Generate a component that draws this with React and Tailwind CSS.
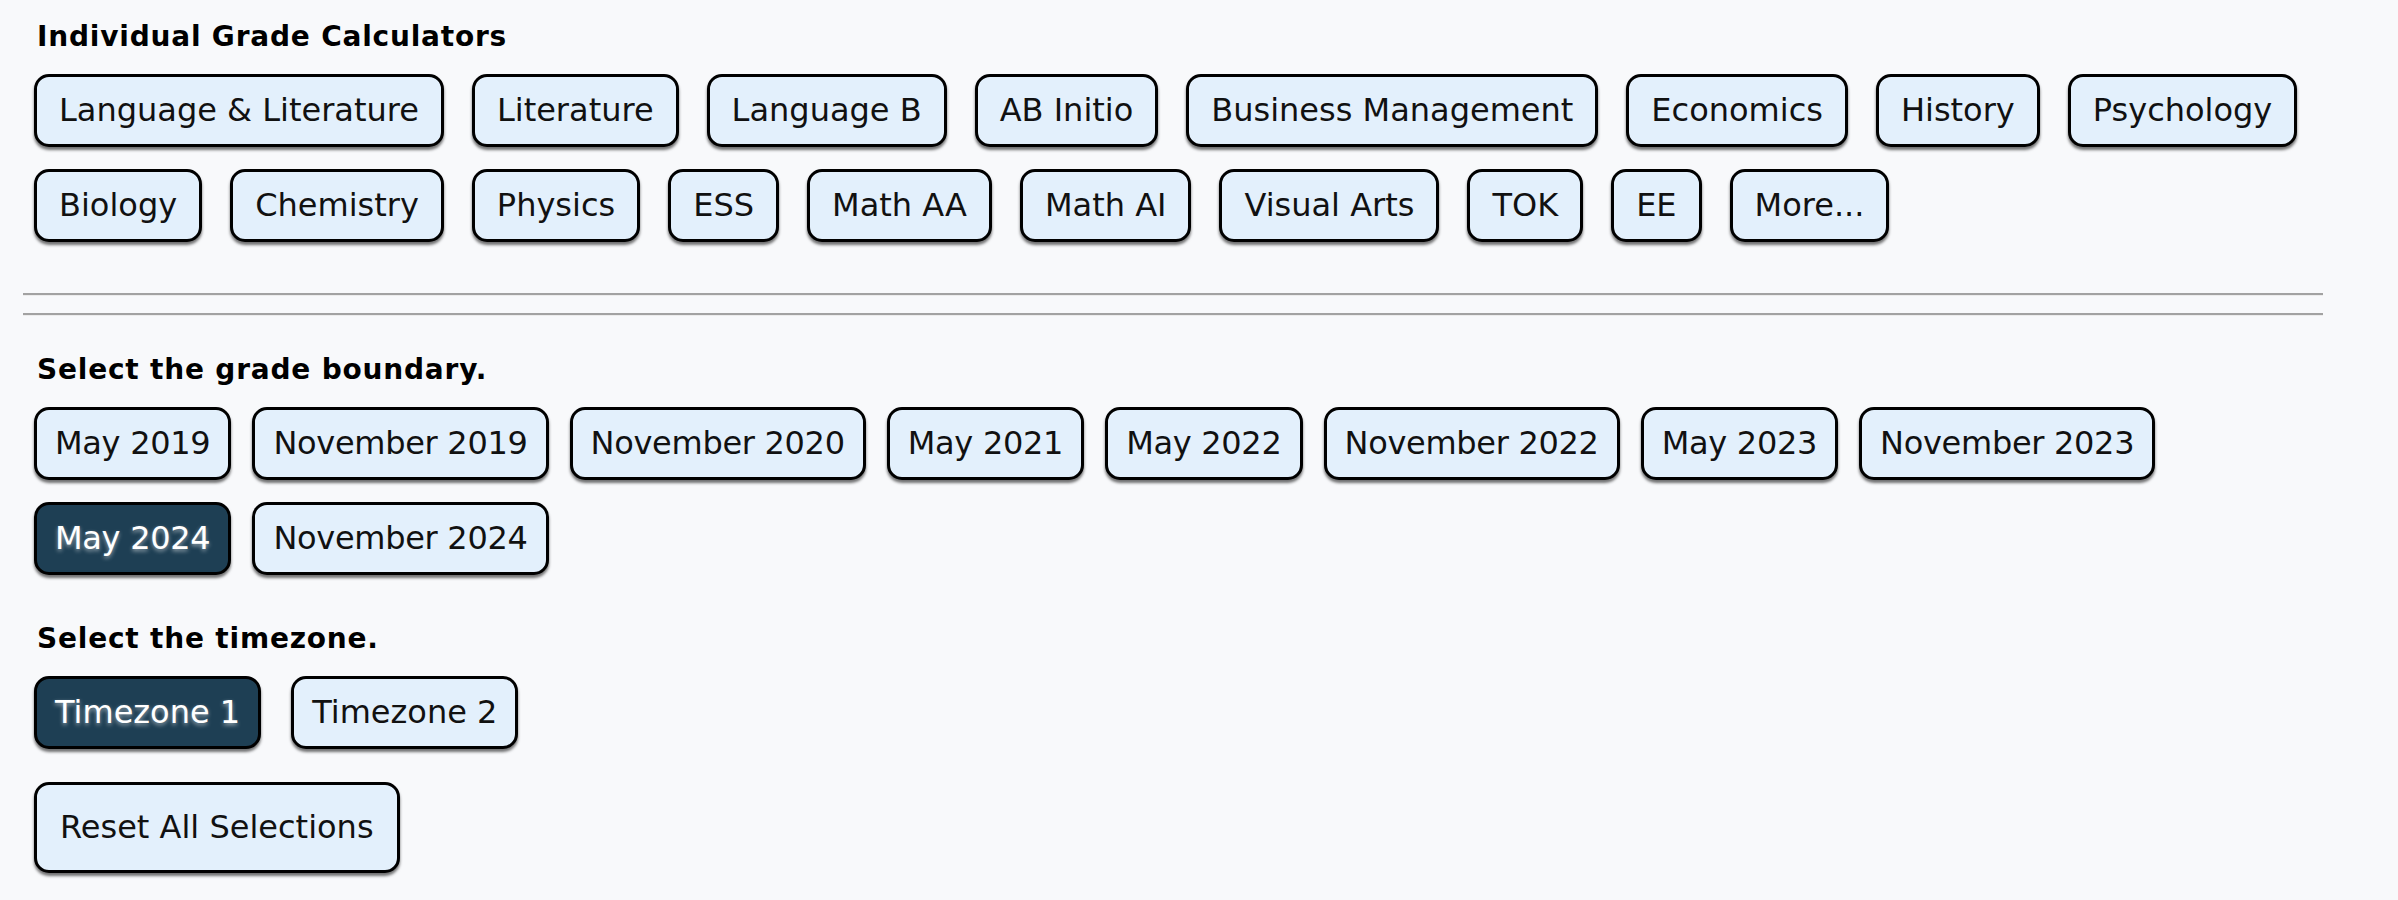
import React, { useState } from 'react'

const SUBJECTS = [
  ['Language & Literature', 'Literature', 'Language B', 'AB Initio', 'Business Management', 'Economics', 'History', 'Psychology'],
  ['Biology', 'Chemistry', 'Physics', 'ESS', 'Math AA', 'Math AI', 'Visual Arts', 'TOK', 'EE', 'More...'],
]

const SESSIONS = [
  ['May 2019', 'November 2019', 'November 2020', 'May 2021', 'May 2022', 'November 2022', 'May 2023', 'November 2023'],
  ['May 2024', 'November 2024'],
]

const TIMEZONES = ['Timezone 1', 'Timezone 2']

function Pill({ label, active, onClick, className = 'h-[73px] px-[22px]' }) {
  return (
    <button
      onClick={onClick}
      className={`flex items-center whitespace-nowrap rounded-[15px] border-[3px] border-black text-[32px] leading-[1.2] shadow-[0_3px_3px_rgba(0,0,0,0.55)] ${
        active
          ? 'bg-[#1e3f54] text-white [text-shadow:0_2px_4px_rgba(255,255,255,0.55)]'
          : 'bg-[#e3f0fc] text-[#111]'
      } ${className}`}
    >
      {label}
    </button>
  )
}

function Heading({ children }) {
  return <h2 className="text-[28px] font-bold leading-[28px] tracking-[0.8px] text-black">{children}</h2>
}

function Divider() {
  return (
    <div className="w-[2300px]">
      <div className="h-[2px] bg-[#a2a2a2]" />
      <div className="h-px bg-[#ececec]" />
    </div>
  )
}

export default function App() {
  const [session, setSession] = useState('May 2024')
  const [timezone, setTimezone] = useState('Timezone 1')

  function reset() {
    setSession(null)
    setTimezone(null)
  }

  return (
    <div className="min-h-[900px] bg-[#f8f9fb] pl-[23px] font-['DejaVu_Sans',sans-serif]">
      <div className="pl-[11px] pt-[23px]">
        <div className="pl-[3px]">
          <Heading>Individual Grade Calculators</Heading>
        </div>
        <div className="mt-[23px] flex flex-col gap-y-[22px]">
          {SUBJECTS.map((row, i) => (
            <div key={i} className="flex gap-x-[28px]">
              {row.map(s => (
                <Pill key={s} label={s} />
              ))}
            </div>
          ))}
        </div>
      </div>

      <div className="mt-[51px] flex flex-col gap-y-[17px]">
        <Divider />
        <Divider />
      </div>

      <div className="pl-[11px] pt-[40px]">
        <div className="pl-[3px]">
          <Heading>Select the grade boundary.</Heading>
        </div>
        <div className="mt-[23px] flex flex-col gap-y-[22px]">
          {SESSIONS.map((row, i) => (
            <div key={i} className="flex gap-x-[21px]">
              {row.map(s => (
                <Pill
                  key={s}
                  label={s}
                  active={session === s}
                  onClick={() => setSession(s)}
                  className="h-[73px] px-[18px] tracking-[-0.3px]"
                />
              ))}
            </div>
          ))}
        </div>

        <div className="mt-[50px] pl-[3px]">
          <Heading>Select the timezone.</Heading>
        </div>
        <div className="mt-[23px] flex gap-x-[30px]">
          {TIMEZONES.map(t => (
            <Pill
              key={t}
              label={t}
              active={timezone === t}
              onClick={() => setTimezone(t)}
              className="h-[73px] px-[18px]"
            />
          ))}
        </div>

        <div className="mt-[33px] flex">
          <Pill label="Reset All Selections" onClick={reset} className="h-[91px] px-[23px]" />
        </div>
      </div>
    </div>
  )
}
